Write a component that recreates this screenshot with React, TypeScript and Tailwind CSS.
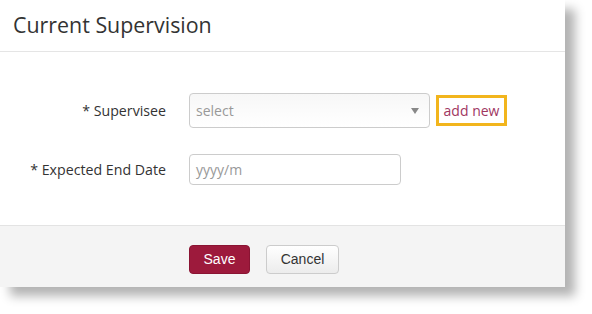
export default function App() {
  return (
    <div className="w-[592px] h-[314px] bg-white" style={{ fontFamily: '"Open Sans", sans-serif' }}>
      <div className="w-[565px] h-[287px] bg-white flex flex-col shadow-[10px_9px_10px_rgba(0,0,0,0.3)]">
        <div className="h-[52px] border-b border-[#e5e5e5] flex items-center px-[13px] pb-[2px]">
          <h1 className="text-[21.4px] text-[#333] leading-none">Current Supervision</h1>
        </div>
        <div className="flex-1 flex flex-col pt-[41px] gap-[26px]">
          <div className="flex items-center">
            <label className="w-[166px] text-right text-[14.2px] text-[#333]">* Supervisee</label>
            <div className="ml-[23px] w-[241px] h-[35px] rounded border border-[#ccc] bg-gradient-to-b from-[#f7f7f7] to-white flex items-center justify-between px-[6px]">
              <span className="text-[14px] text-[#999]">select</span>
              <svg width="8" height="6" viewBox="0 0 8 6" className="mr-[4px]">
                <path d="M0 0h8L4 6z" fill="#888" />
              </svg>
            </div>
            <div className="ml-[6px] w-[71px] h-[31px] border-[3px] border-[#f2b51d] flex items-center justify-center">
              <span className="text-[14px] text-[#a0365f]">add new</span>
            </div>
          </div>
          <div className="flex items-center">
            <label className="w-[166px] text-right text-[14.2px] text-[#333]">* Expected End Date</label>
            <div className="ml-[23px] w-[212px] h-[31px] rounded border border-[#ccc] bg-white flex items-center px-[6px]">
              <span className="text-[14px] text-[#999]">yyyy/m</span>
            </div>
          </div>
        </div>
        <div className="h-[62px] bg-[#f4f4f4] border-t border-[#e3e3e3] flex items-start pt-[19px] pl-[189px] gap-[16px]" style={{ fontFamily: '"Liberation Sans", Arial, sans-serif' }}>
          <button className="w-[61px] h-[29px] rounded bg-[#9d1a3c] text-white text-[14px] border border-[#8a1433]">Save</button>
          <button className="w-[73px] h-[29px] rounded bg-gradient-to-b from-white to-[#ececec] border border-[#ccc] text-[#333] text-[14px]">Cancel</button>
        </div>
      </div>
    </div>
  );
}
